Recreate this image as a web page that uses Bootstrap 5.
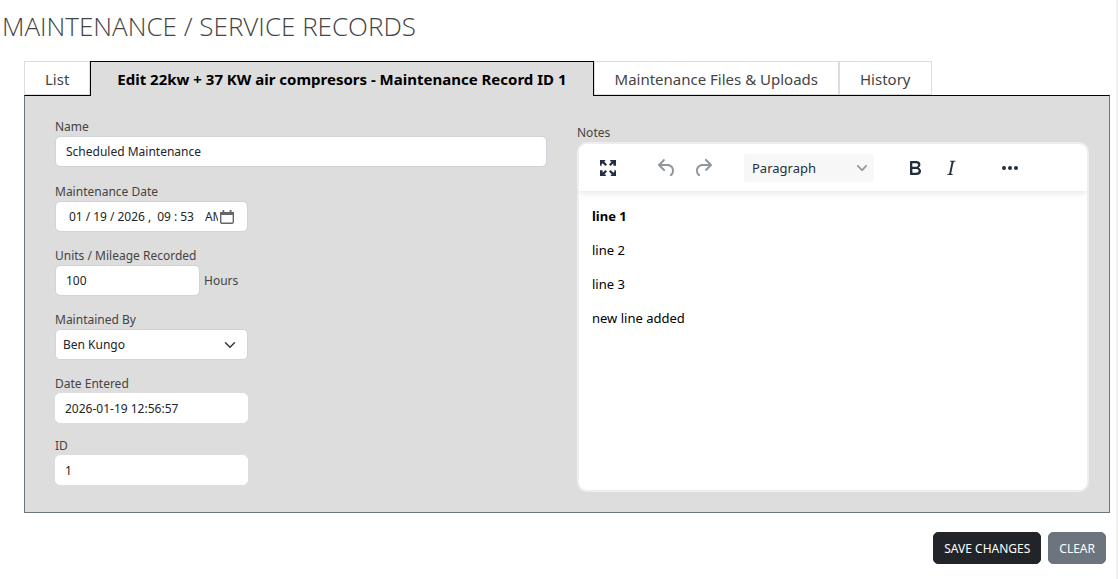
<!DOCTYPE html>
<html lang="en">
<head>
<meta charset="utf-8">
<meta name="viewport" content="width=device-width, initial-scale=1">
<title>Maintenance / Service Records</title>
<link href="https://cdn.jsdelivr.net/npm/bootstrap@5.3.0/dist/css/bootstrap.min.css" rel="stylesheet">
<style>
  body { font-family: "Segoe UI", "Noto Sans", sans-serif; font-size: 12px; line-height: 20px; color: #444; background: #fff; }
  .page { min-height: 100vh; border-right: 2px solid #f0f0f0; }
  .page-title { font-family: "Segoe UI", "Open Sans", sans-serif; font-size: 26px; line-height: 36px; font-weight: 300; padding: 8px 0 17px 2px; margin: 0; color: #444; }
  .record-area { margin: 0 6px 0 24px; }
  .record-tabs { --bs-nav-tabs-border-width: 0; position: relative; z-index: 1; }
  .record-tabs .nav-item { margin-bottom: -1px; }
  .record-tabs .nav-link { height: 34px; margin: 0; padding: 0 20px; border: 1px solid #ddd; border-radius: 0; font-size: 15px; line-height: 34px; color: #444; background: #fff; white-space: nowrap; }
  .record-tabs .nav-link.active { height: 35px; padding: 0 26px; border-color: #000; border-bottom: 0; background: #ddd; color: #000; font-weight: 700; }
  .record-panel { background: #ddd; border: 1px solid #6c757d; border-top-color: #000; padding: 20px 20px 20px 30px; }
  .left-fields { padding-right: 25px; }
  .right-fields { padding: 6px 0 0 5px; }
  .field { margin-bottom: 13px; }
  .field:first-child { margin-bottom: 14px; }
  .field.tight { margin-bottom: 12px; }
  .field label, .notes-label { display: block; height: 20px; line-height: 22px; }
  .form-control, .form-select { font-size: 12px; line-height: 20px; min-height: 0; height: 31px; padding: 4px 10px; border-color: #ced4da; border-radius: 5px; color: #212529; }
  .form-select { padding: 4px 28px 4px 7px; background-size: 14px 12px; background-position: right 10px center; }
  .form-control[readonly] { height: 30px; border-color: #fff; padding: 4px 9px; background: #fff; }
  .w-field { width: 193px; }
  .w-units { width: 145px; }
  .date-input::-webkit-datetime-edit { flex: none; width: 152px; overflow: hidden; white-space: nowrap; }
  .date-input::-webkit-datetime-edit-month-field,
  .date-input::-webkit-datetime-edit-day-field,
  .date-input::-webkit-datetime-edit-year-field,
  .date-input::-webkit-datetime-edit-hour-field,
  .date-input::-webkit-datetime-edit-minute-field { padding: 0 3px; }
  .date-input::-webkit-datetime-edit-ampm-field { padding: 0 3px 0 6px; }
  .date-input::-webkit-calendar-picker-indicator { width: 14px; height: 14px; margin: 0 0 0 2px; padding: 0; opacity: 1; background: url("data:image/svg+xml,%3Csvg xmlns='http://www.w3.org/2000/svg' viewBox='0 0 14 14'%3E%3Cpath fill='none' stroke='%23666' stroke-width='1.400' d='M.7 3.200h12.600v8.600q0 1.500-1.500 1.500H2.200Q.7 13.300.7 11.800z'/%3E%3Cpath fill='%23666' d='M0 2h14v3H0zM2.500 0h1.800v2H2.500zM9.700 0h1.800v2H9.700z'/%3E%3C/svg%3E") center / 14px 14px no-repeat; }
  .date-input { padding-right: 12px; }
  .date-input::-webkit-datetime-edit { width: 152px; max-width: 152px; }
  .editor { height: 350px; background: #fff; border: 2px solid #eee; border-radius: 10px; overflow: hidden; color: #000; font-size: 13px; }
  .editor-bar { height: 47px; padding-left: 11px; box-shadow: 0 2px 6px rgba(34, 47, 62, .12); }
  .tool { width: 36px; height: 28px; padding: 0; border: 0; background: none; display: flex; align-items: center; justify-content: center; color: #222f3e; }
  .tool:disabled { color: #222f3e; opacity: .5; }
  .tool-group { margin-left: 23px; }
  .tool-format { width: 130px; height: 28px; padding: 0 7px 0 8px; border: 0; border-radius: 3px; background: #f7f7f7; color: #222f3e; }
  .editor-text { padding: 15px 13px; }
  .editor-text p { margin: 0 0 14px; }
  .actions { padding: 19px 4px 14px 0; gap: 7px; }
  .actions .btn { height: 32px; padding: 0 10px; font-size: 12px; line-height: 32px; border-radius: 5px; }
</style>
</head>
<body>
<main class="page">
  <h1 class="page-title">MAINTENANCE / SERVICE RECORDS</h1>
  <div class="record-area">
    <ul class="nav nav-tabs record-tabs">
      <li class="nav-item"><a class="nav-link" href="#list">List</a></li>
      <li class="nav-item"><a class="nav-link active" aria-current="page" href="#edit">Edit 22kw + 37 KW air compresors - Maintenance Record ID 1</a></li>
      <li class="nav-item"><a class="nav-link" href="#files">Maintenance Files &amp; Uploads</a></li>
      <li class="nav-item"><a class="nav-link" href="#history">History</a></li>
    </ul>
    <form id="record" class="record-panel">
      <div class="row g-0">
        <div class="col-6 left-fields">
          <div class="field">
            <label for="name">Name</label>
            <input id="name" type="text" class="form-control" value="Scheduled Maintenance">
          </div>
          <div class="field">
            <label for="date">Maintenance Date</label>
            <input id="date" type="datetime-local" class="form-control w-field date-input" value="2026-01-19T09:53">
          </div>
          <div class="field">
            <label for="units">Units / Mileage Recorded</label>
            <div class="d-flex align-items-center gap-1">
              <input id="units" type="text" class="form-control w-units" value="100">
              <span>Hours</span>
            </div>
          </div>
          <div class="field">
            <label for="by">Maintained By</label>
            <select id="by" class="form-select w-field"><option>Ben Kungo</option></select>
          </div>
          <div class="field tight">
            <label for="entered">Date Entered</label>
            <input id="entered" type="text" class="form-control w-field" value="2026-01-19 12:56:57" readonly>
          </div>
          <div class="field mb-0">
            <label for="rid">ID</label>
            <input id="rid" type="text" class="form-control w-field" value="1" readonly>
          </div>
        </div>
        <div class="col-6 right-fields">
          <span id="notes-label" class="notes-label">Notes</span>
          <div class="editor">
            <div class="editor-bar d-flex align-items-center" role="toolbar" aria-label="Notes formatting">
              <button type="button" class="tool" aria-label="Fullscreen"><svg width="24" height="24" viewBox="0 0 24 24" fill="currentColor"><path d="M4 4h5.800L8.200 5.600 11 8.400 9.400 10 6.600 7.200 5.600 8.200V9.800H4zM20 4h-5.800v1.600h1.600L13 8.400 14.600 10l2.800-2.800v2.600H20zM4 20h5.800v-1.600H8.200L11 15.600 9.400 14l-2.800 2.800v-2.600H4zM20 20h-5.800l1.600-1.600L13 15.600l1.600-1.600 2.800 2.800 1-1v-1.600H20z"/></svg></button>
              <button type="button" class="tool tool-group" aria-label="Undo" disabled><svg width="24" height="24" viewBox="0 0 24 24" fill="currentColor"><path d="M6.400 8H12c3.700 0 6.200 2 6.800 5.100.6 2.700-.4 5.600-2.300 6.800a1 1 0 0 1-1-1.800c1.100-.6 1.800-2.700 1.400-4.600-.5-2.100-2.100-3.500-4.900-3.500H6.400l3.300 3.300a1 1 0 1 1-1.400 1.400l-5-5a1 1 0 0 1 0-1.400l5-5a1 1 0 0 1 1.400 1.400L6.400 8Z"/></svg></button>
              <button type="button" class="tool" aria-label="Redo" disabled><svg width="24" height="24" viewBox="0 0 24 24" fill="currentColor"><path d="M17.600 10H12c-2.800 0-4.400 1.400-4.900 3.500-.4 2 .3 4 1.400 4.600a1 1 0 1 1-1 1.800c-2-1.200-2.900-4.100-2.300-6.800.6-3 3-5.100 6.800-5.100h5.600l-3.300-3.300a1 1 0 1 1 1.400-1.400l5 5a1 1 0 0 1 0 1.400l-5 5a1 1 0 0 1-1.400-1.400l3.300-3.300Z"/></svg></button>
              <button type="button" class="tool-format tool-group d-flex align-items-center justify-content-between">Paragraph<svg width="10" height="10" viewBox="0 0 10 10" fill="#222f3e" fill-opacity=".5"><path d="M8.700 2.200c.3-.3.8-.3 1 0 .4.400.4.900 0 1.200L5.700 7.800c-.3.300-.9.300-1.200 0L.2 3.400a.8.8 0 0 1 0-1.200c.3-.3.800-.3 1.100 0L5 6l3.700-3.800Z"/></svg></button>
              <button type="button" class="tool tool-group" aria-label="Bold"><svg width="24" height="24" viewBox="0 0 24 24" fill="currentColor"><path d="M7.800 19c-.3 0-.5 0-.6-.2l-.2-.5V5.700c0-.2 0-.4.200-.5l.6-.2h5c1.500 0 2.700.3 3.500 1 .7.600 1.100 1.400 1.100 2.500a3 3 0 0 1-.6 1.900c-.4.600-1 1-1.600 1.200.4.100.9.300 1.300.6s.8.700 1 1.200c.4.400.5 1 .5 1.600 0 1.300-.4 2.300-1.300 3-.8.700-2.100 1-3.800 1H7.800Zm5-8.300c.6 0 1.200-.1 1.600-.5.400-.3.600-.7.600-1.300 0-1.100-.8-1.700-2.300-1.700H9.300v3.500h3.400Zm.5 6c.7 0 1.300-.1 1.700-.4.400-.4.600-.9.600-1.500s-.2-1-.7-1.400c-.4-.3-1-.4-2-.4H9.400v3.800h4Z" fill-rule="evenodd"/></svg></button>
              <button type="button" class="tool" aria-label="Italic"><svg width="24" height="24" viewBox="0 0 24 24" fill="currentColor"><path d="m16.700 4.700-.1.900h-.3c-.6 0-1 0-1.400.3-.3.300-.4.600-.5 1.100l-2.100 9.800v.6c0 .5.400.8 1.400.8h.2l-.2.800H8l.2-.8h.2c1.100 0 1.800-.5 2-1.500l2-9.800.1-.5c0-.6-.4-.8-1.400-.8h-.3l.2-.9h5.800Z" fill-rule="evenodd"/></svg></button>
              <button type="button" class="tool tool-group" aria-label="More"><svg width="24" height="24" viewBox="0 0 24 24" fill="currentColor"><path d="M6 10a2 2 0 0 0-2 2c0 1.100.9 2 2 2a2 2 0 0 0 2-2 2 2 0 0 0-2-2Zm12 0a2 2 0 0 0-2 2c0 1.100.9 2 2 2a2 2 0 0 0 2-2 2 2 0 0 0-2-2Zm-6 0a2 2 0 0 0-2 2c0 1.100.9 2 2 2a2 2 0 0 0 2-2 2 2 0 0 0-2-2Z"/></svg></button>
            </div>
            <div class="editor-text" contenteditable="true" role="textbox" aria-multiline="true" aria-labelledby="notes-label">
              <p><strong>line 1</strong></p>
              <p>line 2</p>
              <p>line 3</p>
              <p>new line added</p>
            </div>
          </div>
        </div>
      </div>
    </form>
    <div class="actions d-flex justify-content-end">
      <button type="submit" form="record" class="btn btn-dark">SAVE CHANGES</button>
      <button type="reset" form="record" class="btn btn-secondary">CLEAR</button>
    </div>
  </div>
</main>
<script src="https://cdn.jsdelivr.net/npm/bootstrap@5.3.0/dist/js/bootstrap.bundle.min.js"></script>
</body>
</html>
